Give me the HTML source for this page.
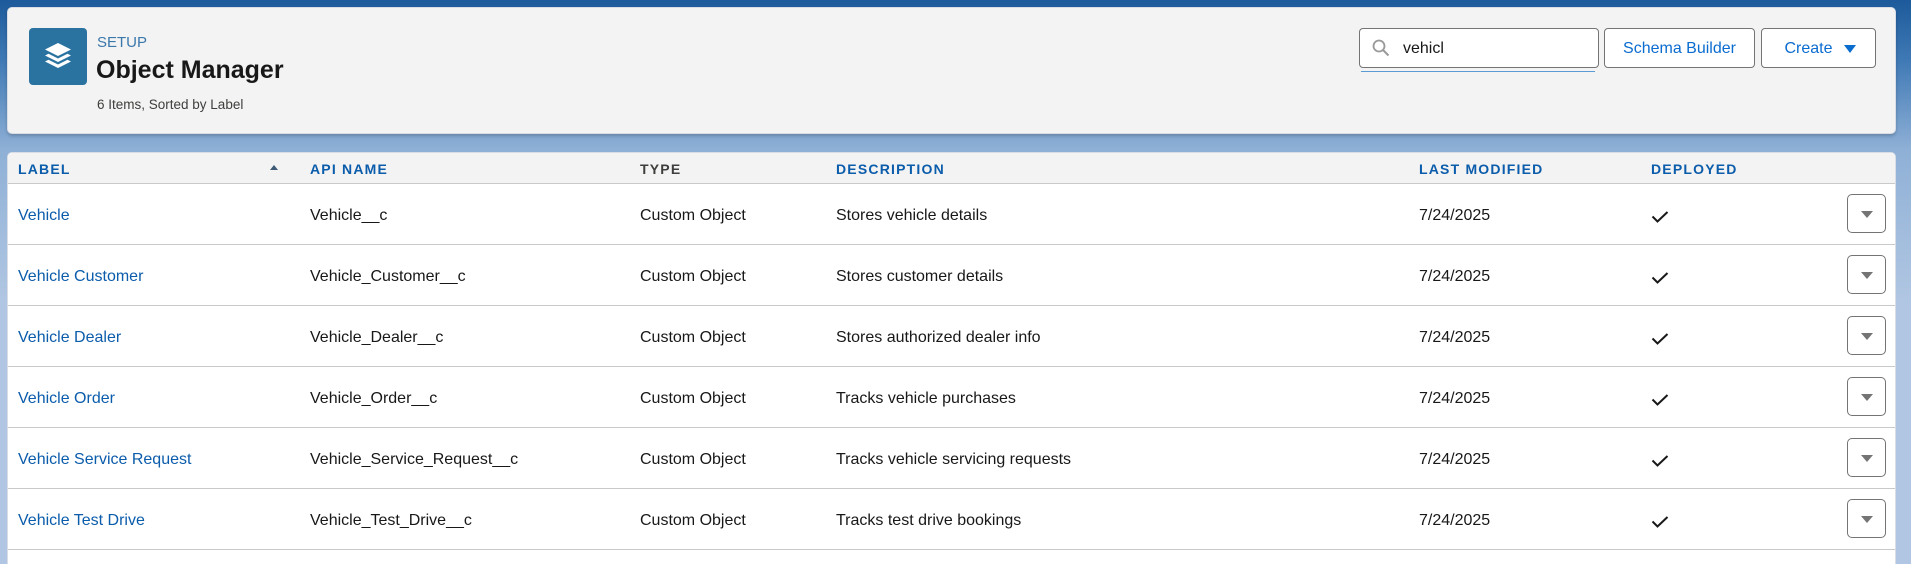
<!DOCTYPE html>
<html style="overflow:hidden;height:564px"><head><meta charset="utf-8"><style>
*{box-sizing:border-box;margin:0;padding:0}
body{width:1911px;height:564px;overflow:hidden;font-family:"Liberation Sans",sans-serif;background:linear-gradient(180deg,#1d5a9b 0%,#3f79b5 60px,#8fb0d6 150px,#b0c6e2 300px);position:relative}
.card{position:absolute;left:7px;top:7px;width:1889px;height:127px;background:#f3f3f3;border-radius:5px;box-shadow:0 2px 3px rgba(0,0,0,.2);border:1px solid #d8dde6}
.icon{position:absolute;left:21px;top:20px;width:58px;height:57px;background:#2a73a0;border-radius:4px}
.setup{position:absolute;left:89px;top:26px;font-size:15px;color:#3a78ac}
.title{position:absolute;left:88px;top:48px;font-size:25px;font-weight:bold;color:#181818}
.sub{position:absolute;left:89px;top:89px;font-size:13.5px;color:#3e3e3c}
.search{position:absolute;left:1351px;top:20px;width:240px;height:40px;background:#fff;border:1px solid #747474;border-radius:4px;font-size:16px;color:#181818;padding:11px 0 0 43px}
.search:after{content:"";position:absolute;left:1px;right:3px;bottom:-5px;border-bottom:1px solid #5b9bd5}
.btn{position:absolute;top:20px;height:40px;background:#fff;border:1px solid #747474;border-radius:4px;font-size:16px;color:#0b6cd0;text-align:center;padding-top:11px}
.tbl{position:absolute;left:7px;top:152px;width:1889px;height:412px;background:#fff;border-radius:5px 5px 0 0;border:1px solid #d8dde6;border-bottom:none}
.hdr{position:absolute;left:0;top:0;width:100%;height:31px;background:#f3f3f3;border-bottom:1px solid #c9c9c9;border-radius:5px 5px 0 0}
.h{position:absolute;top:8px;font-size:14px;font-weight:bold;letter-spacing:1.2px;color:#0b5cab}
.row{position:absolute;left:0;width:100%;height:61px;border-bottom:1px solid #c9c9c9}
.c{position:absolute;top:23px;font-size:16px;color:#181818}
.lnk{color:#0b5cab}
.chk{position:absolute;left:1643px;top:27px}
.act{position:absolute;left:1839px;top:10px;width:39px;height:39px;border:1px solid #747474;border-radius:5px}
.act:after{content:"";position:absolute;left:13px;top:16px;border-left:6.5px solid transparent;border-right:6.5px solid transparent;border-top:7px solid #747474}
</style></head><body>
<div class="card">
<div class="icon"><svg width="58" height="57" viewBox="0 0 58 57"><g fill="#fff"><path d="M29 15l13 6.5-13 6.5-13-6.5z"/><path d="M16 27.5l3.5-1.7 9.5 4.7 9.5-4.7 3.5 1.7-13 6.5z"/><path d="M16 33.5l3.5-1.7 9.5 4.7 9.5-4.7 3.5 1.7-13 6.5z"/></g></svg></div>
<div class="setup">SETUP</div>
<div class="title">Object Manager</div>
<div class="sub">6 Items, Sorted by Label</div>
<div class="search"><svg style="position:absolute;left:12px;top:10px" width="18" height="18" viewBox="0 0 18 18"><circle cx="7" cy="7" r="5.5" fill="none" stroke="#999" stroke-width="1.8"/><path d="M11 11l5.5 5.5" stroke="#999" stroke-width="2"/></svg>vehicl</div>
<div class="btn" style="left:1596px;width:151px">Schema Builder</div>
<div class="btn" style="left:1753px;width:115px;padding-right:20px">Create<span style="position:absolute;right:19px;top:16px;border-left:6px solid transparent;border-right:6px solid transparent;border-top:8px solid #0b6cd0"></span></div>
</div>
<div class="tbl">
<div class="hdr">
<div class="h" style="left:10px">LABEL</div>
<div style="position:absolute;left:262px;top:12px;border-left:4.5px solid transparent;border-right:4.5px solid transparent;border-bottom:5px solid #3e5b76"></div>
<div class="h" style="left:302px">API NAME</div>
<div class="h" style="left:632px;color:#3e3e3c">TYPE</div>
<div class="h" style="left:828px">DESCRIPTION</div>
<div class="h" style="left:1411px">LAST MODIFIED</div>
<div class="h" style="left:1643px">DEPLOYED</div>
</div>
<div class="row" style="top:31px"><div class="c lnk" style="left:10px">Vehicle</div><div class="c" style="left:302px">Vehicle__c</div><div class="c" style="left:632px">Custom Object</div><div class="c" style="left:828px">Stores vehicle details</div><div class="c" style="left:1411px">7/24/2025</div><svg class="chk" width="18" height="12" viewBox="0 0 18 12"><path d="M1.5 5.5l5 5L16.5 1" fill="none" stroke="#181818" stroke-width="2"/></svg><div class="act"></div></div>
<div class="row" style="top:92px"><div class="c lnk" style="left:10px">Vehicle Customer</div><div class="c" style="left:302px">Vehicle_Customer__c</div><div class="c" style="left:632px">Custom Object</div><div class="c" style="left:828px">Stores customer details</div><div class="c" style="left:1411px">7/24/2025</div><svg class="chk" width="18" height="12" viewBox="0 0 18 12"><path d="M1.5 5.5l5 5L16.5 1" fill="none" stroke="#181818" stroke-width="2"/></svg><div class="act"></div></div>
<div class="row" style="top:153px"><div class="c lnk" style="left:10px">Vehicle Dealer</div><div class="c" style="left:302px">Vehicle_Dealer__c</div><div class="c" style="left:632px">Custom Object</div><div class="c" style="left:828px">Stores authorized dealer info</div><div class="c" style="left:1411px">7/24/2025</div><svg class="chk" width="18" height="12" viewBox="0 0 18 12"><path d="M1.5 5.5l5 5L16.5 1" fill="none" stroke="#181818" stroke-width="2"/></svg><div class="act"></div></div>
<div class="row" style="top:214px"><div class="c lnk" style="left:10px">Vehicle Order</div><div class="c" style="left:302px">Vehicle_Order__c</div><div class="c" style="left:632px">Custom Object</div><div class="c" style="left:828px">Tracks vehicle purchases</div><div class="c" style="left:1411px">7/24/2025</div><svg class="chk" width="18" height="12" viewBox="0 0 18 12"><path d="M1.5 5.5l5 5L16.5 1" fill="none" stroke="#181818" stroke-width="2"/></svg><div class="act"></div></div>
<div class="row" style="top:275px"><div class="c lnk" style="left:10px">Vehicle Service Request</div><div class="c" style="left:302px">Vehicle_Service_Request__c</div><div class="c" style="left:632px">Custom Object</div><div class="c" style="left:828px">Tracks vehicle servicing requests</div><div class="c" style="left:1411px">7/24/2025</div><svg class="chk" width="18" height="12" viewBox="0 0 18 12"><path d="M1.5 5.5l5 5L16.5 1" fill="none" stroke="#181818" stroke-width="2"/></svg><div class="act"></div></div>
<div class="row" style="top:336px"><div class="c lnk" style="left:10px">Vehicle Test Drive</div><div class="c" style="left:302px">Vehicle_Test_Drive__c</div><div class="c" style="left:632px">Custom Object</div><div class="c" style="left:828px">Tracks test drive bookings</div><div class="c" style="left:1411px">7/24/2025</div><svg class="chk" width="18" height="12" viewBox="0 0 18 12"><path d="M1.5 5.5l5 5L16.5 1" fill="none" stroke="#181818" stroke-width="2"/></svg><div class="act"></div></div>
</div>
</body></html>
